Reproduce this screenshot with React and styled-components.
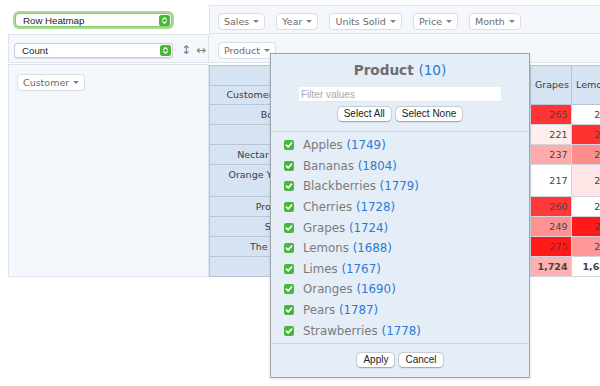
import React from 'react';
import styled, { createGlobalStyle } from 'styled-components';

const GlobalStyle = createGlobalStyle`
  html {
    overflow: hidden;
    background: #fff;
  }
  body {
    margin: 0;
    padding: 0;
    min-height: 386px;
    font-family: "DejaVu Sans", Verdana, sans-serif;
    color: #555;
  }
`;

const PRODUCTS = ['Apples', 'Bananas', 'Blackberries', 'Cherries', 'Grapes', 'Lemons', 'Limes', 'Oranges', 'Pears', 'Strawberries'];
const COUNTS = [1749, 1804, 1779, 1728, 1724, 1688, 1767, 1690, 1787, 1778];
const LABEL_WIDTHS = [80, 82];
const COL_WIDTHS = [38, 40, 43, 38, 41, 45, 40, 48, 38, 62];
const TOTAL_WIDTH = 44;

const ROWS = [
  { name: 'Bolt Juice Co', values: [255, 278, 250, 252, 265, 214, 249, 248, 242, 251] },
  { name: 'Zesty', values: [256, 248, 249, 252, 221, 278, 249, 216, 293, 251] },
  { name: 'Nectar of the Gods Inc', values: [256, 248, 282, 215, 237, 245, 249, 248, 243, 251] },
  { name: 'Orange You Glad Juice Bar Limited', values: [256, 287, 250, 252, 217, 224, 249, 249, 242, 251] },
  { name: 'Producers Plus', values: [257, 248, 249, 252, 260, 218, 272, 248, 242, 251] },
  { name: 'Sunny Day', values: [256, 247, 250, 252, 249, 268, 249, 232, 243, 272] },
  { name: 'The Juice Factory', values: [213, 248, 249, 253, 275, 241, 250, 249, 282, 251] }
];

const ATTRS = ['Sales', 'Year', 'Units Solid', 'Price', 'Month'];

const fmt = n => n.toLocaleString('en-US');
const heatScale = values => {
  const min = Math.min(...values);
  const max = Math.max(...values);
  return v => (v - min) / (max - min);
};

const Ui = styled.div`
  position: relative;
  display: grid;
  grid-template-columns: 201px 1fr;
  grid-template-rows: 29px 29px auto;
  width: 1100px;
  padding: 5px 0 0 8px;
`;

const RendererCell = styled.div`
  padding: 8px 0 0 7px;
`;

const AxisCell = styled.div`
  background: #f4f7fb;
  border: 1px solid #dde3ea;
  display: flex;
  align-items: flex-start;
  gap: 11px;
  padding: 7px 8px;
`;

const ColsCell = styled(AxisCell)`
  border-top: 0;
  border-left: 0;
  padding: 8px 9px;
`;

const CountCell = styled(AxisCell)`
  gap: 0;
  padding: 8px 0 0 5px;
`;

const RowsCell = styled(AxisCell)`
  margin-top: 1px;
  padding: 9px 8px;
`;

const OutputCell = styled.div`
  margin-top: 2px;
`;

const Select = styled.div`
  box-sizing: border-box;
  width: ${p => p.$width}px;
  height: ${p => p.$height}px;
  display: flex;
  align-items: center;
  justify-content: space-between;
  padding: 0 1px 0 7px;
  background: #fff;
  border: 1px solid ${p => (p.$focus ? '#8cc874' : '#cfcfcf')};
  border-radius: 4px;
  box-shadow: ${p => (p.$focus ? '0 0 0 2px #a9dc93' : '0 0.5px 1px rgba(0, 0, 0, 0.12)')};
  font-family: "Liberation Sans", Arial, sans-serif;
  font-size: 9.7px;
  color: #222;
`;

const Stepper = () => (
  <svg width="11" height="11" viewBox="0 0 11 11">
    <rect x="0" y="0" width="11" height="11" rx="2.5" fill="#4cb33b" />
    <path d="M3.6 4.6 L5.5 2.7 L7.4 4.6 M3.6 6.4 L5.5 8.3 L7.4 6.4" fill="none" stroke="#fff" strokeWidth="1.2" strokeLinecap="round" strokeLinejoin="round" />
  </svg>
);

const OrderToggle = styled.span`
  font-size: 12px;
  line-height: 14px;
  color: #7a7a7a;
  margin-left: ${p => p.$gap}px;
`;

const Pill = styled.div`
  box-sizing: border-box;
  height: 17px;
  display: inline-flex;
  align-items: center;
  padding: 0 5px 0 5px;
  background: #fff;
  border: 1px solid #dadee3;
  border-radius: 4px;
  font-size: 9.5px;
  color: #6b6b6b;
  white-space: nowrap;
`;

const Caret = styled.span`
  width: 0;
  height: 0;
  margin-left: 4px;
  border-left: 3px solid transparent;
  border-right: 3px solid transparent;
  border-top: 3.5px solid #808080;
`;

const PivotTable = styled.table`
  border-collapse: collapse;
  table-layout: fixed;
  width: ${p => p.$width}px;
  font-size: 9.5px;
  line-height: 11.5px;
  color: #444;
`;

const Col = styled.col`
  width: ${p => p.$w}px;
`;

const Th = styled.th`
  background: #d5e3f3;
  border: 1px solid #b9c5d3;
  padding: ${p => (p.$head ? '3.5px 4px' : '3.8px 4px')};
  font-weight: normal;
  color: #3d3d3d;
  text-align: ${p => p.$align || 'center'};
  overflow: hidden;
  white-space: ${p => (p.$wrap ? 'normal' : 'nowrap')};
`;

const Td = styled.td`
  border: 1px solid #cfd6de;
  padding: 3.8px 3.5px;
  text-align: right;
  white-space: nowrap;
  overflow: hidden;
  font-weight: ${p => (p.$bold ? 'bold' : 'normal')};
  background: ${p => {
    if (p.$heat == null) return '#fff';
    const c = 255 - Math.round(255 * p.$heat);
    return `rgb(255, ${c}, ${c})`;
  }};
`;

const Popup = styled.div`
  position: absolute;
  left: 270px;
  top: 53px;
  width: 260px;
  box-sizing: border-box;
  display: flex;
  flex-direction: column;
  background: #e5edf7;
  border: 1px solid #9ea5ad;
  box-shadow: 0 1px 3px rgba(0, 0, 0, 0.12);
`;

const PopupTitle = styled.div`
  margin-top: 8px;
  text-align: center;
  font-size: 13.6px;
  line-height: 17px;
  font-weight: bold;
  color: #6e6e6e;
`;

const Num = styled.span`
  color: #2b7bd3;
  font-weight: normal;
`;

const FilterInput = styled.input`
  display: block;
  box-sizing: border-box;
  width: 202px;
  height: 15px;
  margin: 8px auto 0;
  padding: 0 2px;
  border: 0;
  border-bottom: 1px solid #e3e6ea;
  outline: none;
  background: #fff;
  font-family: "Liberation Sans", Arial, sans-serif;
  font-size: 10px;
  color: #333;
  &::placeholder {
    color: #a8a8a8;
  }
`;

const ButtonRow = styled.div`
  display: flex;
  justify-content: center;
  gap: 5px;
  margin-top: ${p => p.$top}px;
  padding-bottom: ${p => p.$bottom || 0}px;
`;

const Button = styled.button`
  height: 14px;
  padding: 0 6px;
  border: 0;
  border-radius: 4px;
  background: #fff;
  box-shadow: 0 0 0 0.5px rgba(0, 0, 0, 0.18), 0 0.5px 1.5px rgba(0, 0, 0, 0.25);
  font-family: "Liberation Sans", Arial, sans-serif;
  font-size: 10px;
  line-height: 14px;
  color: #222;
`;

const Divider = styled.div`
  height: 1px;
  background: #cdd4dc;
  margin-top: ${p => p.$top || 0}px;
`;

const CheckList = styled.div`
  padding: 3px 0 2px;
`;

const CheckItem = styled.div`
  height: 20.6px;
  display: flex;
  align-items: center;
  padding-left: 13px;
  font-size: 11.8px;
  color: #7b7b7b;
  white-space: pre;
`;

const CheckBox = () => (
  <svg width="10" height="10" viewBox="0 0 10 10" style={{ marginRight: 9, flex: 'none' }}>
    <rect x="0" y="0" width="10" height="10" rx="2" fill="#47b83a" />
    <path d="M2.4 5.1 L4.2 6.9 L7.6 3.1" fill="none" stroke="#fff" strokeWidth="1.6" strokeLinecap="round" strokeLinejoin="round" />
  </svg>
);

const ProductFilter = () => (
  <Popup>
    <PopupTitle>
      Product <Num>(10)</Num>
    </PopupTitle>
    <FilterInput placeholder="Filter values" />
    <ButtonRow $top={5}>
      <Button>Select All</Button>
      <Button>Select None</Button>
    </ButtonRow>
    <Divider $top={10} />
    <CheckList>
      {PRODUCTS.map((p, i) => (
        <CheckItem key={p}>
          <CheckBox />
          {p} <Num>({COUNTS[i]})</Num>
        </CheckItem>
      ))}
    </CheckList>
    <Divider />
    <ButtonRow $top={9} $bottom={10}>
      <Button>Apply</Button>
      <Button>Cancel</Button>
    </ButtonRow>
  </Popup>
);

const Heatmap = () => {
  const colTotals = PRODUCTS.map((_, j) => ROWS.reduce((s, r) => s + r.values[j], 0));
  const totalScale = heatScale(colTotals);
  const widths = [...LABEL_WIDTHS, ...COL_WIDTHS, TOTAL_WIDTH];
  return (
    <PivotTable $width={widths.reduce((a, b) => a + b, 0)}>
      <colgroup>
        {widths.map((w, i) => (
          <Col key={i} $w={w} />
        ))}
      </colgroup>
      <thead>
        <tr>
          <Th $head />
          <Th $head>Product</Th>
          {PRODUCTS.map(p => (
            <Th $head key={p} rowSpan={2}>
              {p}
            </Th>
          ))}
          <Th $head rowSpan={2} $align="right">
            Totals
          </Th>
        </tr>
        <tr>
          <Th $head>Customer</Th>
          <Th $head />
        </tr>
      </thead>
      <tbody>
        {ROWS.map(r => {
          const scale = heatScale(r.values);
          return (
            <tr key={r.name}>
              <Th colSpan={2} $wrap>
                {r.name}
              </Th>
              {r.values.map((v, j) => (
                <Td key={j} $heat={scale(v)}>
                  {v}
                </Td>
              ))}
              <Td $bold>{fmt(r.values.reduce((a, b) => a + b, 0))}</Td>
            </tr>
          );
        })}
        <tr>
          <Th colSpan={2} $align="right">
            Totals
          </Th>
          {colTotals.map((t, j) => (
            <Td key={j} $bold $heat={totalScale(t)}>
              {fmt(t)}
            </Td>
          ))}
          <Td $bold>{fmt(colTotals.reduce((a, b) => a + b, 0))}</Td>
        </tr>
      </tbody>
    </PivotTable>
  );
};

const App = () => (
  <>
    <GlobalStyle />
    <Ui>
      <RendererCell>
        <Select $focus $width={157} $height={14}>
          Row Heatmap
          <Stepper />
        </Select>
      </RendererCell>
      <AxisCell>
        {ATTRS.map(a => (
          <Pill key={a}>
            {a}
            <Caret />
          </Pill>
        ))}
      </AxisCell>
      <CountCell>
        <Select $width={159} $height={15}>
          Count
          <Stepper />
        </Select>
        <OrderToggle $gap={8}>↕</OrderToggle>
        <OrderToggle $gap={5}>↔</OrderToggle>
      </CountCell>
      <ColsCell>
        <Pill>
          Product
          <Caret />
        </Pill>
      </ColsCell>
      <RowsCell>
        <Pill>
          Customer
          <Caret />
        </Pill>
      </RowsCell>
      <OutputCell>
        <Heatmap />
      </OutputCell>
      <ProductFilter />
    </Ui>
  </>
);

export default App;
